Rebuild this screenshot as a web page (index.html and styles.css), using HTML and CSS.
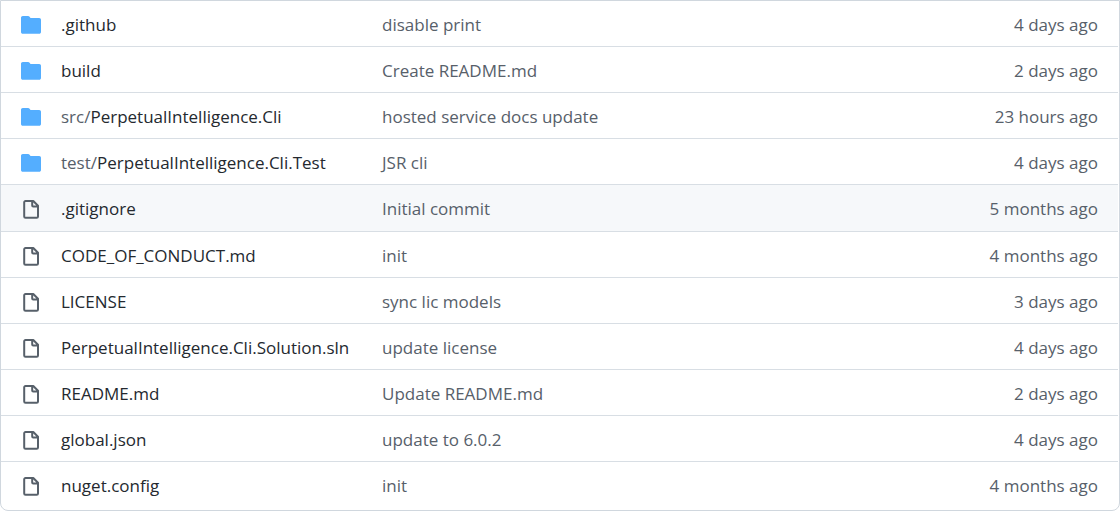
FILE: index.html
```
<!DOCTYPE html>
<html lang="en">
<head>
<meta charset="utf-8">
<title>Repository files</title>
<link rel="stylesheet" href="styles.css">
</head>
<body>
<svg class="sprite" aria-hidden="true">
<symbol id="folder" viewBox="0 0 20 20"><path d="M1.8 1H7c.7 0 1.2.3 1.6.8l.7.9c.2.3.5.4.8.4h8.1c1 0 1.8.8 1.8 1.8v12c0 1-.8 1.8-1.8 1.8H1.800C.8 18.700 0 17.900 0 16.900V2.800C0 1.800.8 1 1.800 1z"/></symbol>
<symbol id="file" viewBox="0 0 20 20"><path d="M4.500 2h7.800L17 6.700V17.500a1.300 1.300 0 0 1-1.300 1.300H4.500a1.300 1.300 0 0 1-1.300-1.300V3.300A1.300 1.300 0 0 1 4.500 2zM11.200 2v4.600a1 1 0 0 0 1 1H17"/></symbol>
</svg>
<table class="files">
<tbody>
<tr><td class="kind"><svg class="icon folder"><use href="#folder"/></svg></td><td class="name"><a href="#">.github</a></td><td class="message"><a href="#">disable print</a></td><td class="age">4 days ago</td></tr>
<tr><td class="kind"><svg class="icon folder"><use href="#folder"/></svg></td><td class="name"><a href="#">build</a></td><td class="message"><a href="#">Create README.md</a></td><td class="age">2 days ago</td></tr>
<tr><td class="kind"><svg class="icon folder"><use href="#folder"/></svg></td><td class="name"><a href="#"><span class="parent">src/</span>PerpetualIntelligence.Cli</a></td><td class="message"><a href="#">hosted service docs update</a></td><td class="age">23 hours ago</td></tr>
<tr><td class="kind"><svg class="icon folder"><use href="#folder"/></svg></td><td class="name"><a href="#"><span class="parent">test/</span>PerpetualIntelligence.Cli.Test</a></td><td class="message"><a href="#">JSR cli</a></td><td class="age">4 days ago</td></tr>
<tr class="active"><td class="kind"><svg class="icon file"><use href="#file"/></svg></td><td class="name"><a href="#">.gitignore</a></td><td class="message"><a href="#">Initial commit</a></td><td class="age">5 months ago</td></tr>
<tr><td class="kind"><svg class="icon file"><use href="#file"/></svg></td><td class="name"><a href="#">CODE_OF_CONDUCT.md</a></td><td class="message"><a href="#">init</a></td><td class="age">4 months ago</td></tr>
<tr><td class="kind"><svg class="icon file"><use href="#file"/></svg></td><td class="name"><a href="#">LICENSE</a></td><td class="message"><a href="#">sync lic models</a></td><td class="age">3 days ago</td></tr>
<tr><td class="kind"><svg class="icon file"><use href="#file"/></svg></td><td class="name"><a href="#">PerpetualIntelligence.Cli.Solution.sln</a></td><td class="message"><a href="#">update license</a></td><td class="age">4 days ago</td></tr>
<tr><td class="kind"><svg class="icon file"><use href="#file"/></svg></td><td class="name"><a href="#">README.md</a></td><td class="message"><a href="#">Update README.md</a></td><td class="age">2 days ago</td></tr>
<tr><td class="kind"><svg class="icon file"><use href="#file"/></svg></td><td class="name"><a href="#">global.json</a></td><td class="message"><a href="#">update to 6.0.2</a></td><td class="age">4 days ago</td></tr>
<tr><td class="kind"><svg class="icon file"><use href="#file"/></svg></td><td class="name"><a href="#">nuget.config</a></td><td class="message"><a href="#">init</a></td><td class="age">4 months ago</td></tr>
</tbody>
</table>
</body>
</html>
```
FILE: styles.css
```
* { box-sizing: border-box; }
body {
  margin: 0;
  background: #fff;
  color: #24292f;
  font: 17px/24px "Segoe UI", "Open Sans", "Noto Sans", sans-serif;
}
.sprite { display: none; }
.files {
  width: 100%;
  table-layout: fixed;
  border-collapse: separate;
  border-spacing: 0;
  border: 1px solid #d0d7de;
  border-radius: 0 0 8px 8px;
  padding-right: 1px;
}
td {
  padding: 12px 0 9px;
  border-top: 1px solid #d8dee4;
  white-space: nowrap;
}
tr:first-child td { border-top: 0; }
tr:last-child td { padding-bottom: 12px; }
.active td { background: #f6f8fa; padding-bottom: 10px; }
.kind { width: 60px; padding-left: 20px; vertical-align: top; }
.name { width: 321px; }
.message, .age, .parent { color: #57606a; }
.age { width: 160px; padding-right: 20px; text-align: right; }
a { color: inherit; text-decoration: none; }
a:hover { text-decoration: underline; }
.icon { display: block; width: 20px; height: 20px; margin: 2px 0; }
.folder { fill: #54aeff; }
.file { fill: none; stroke: #57606a; stroke-width: 2; stroke-linejoin: round; }
```
